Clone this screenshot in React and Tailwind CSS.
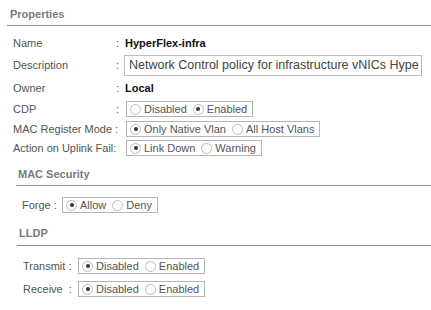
import React from "react";

function Radio({ checked }) {
  return (
    <span className="inline-flex items-center justify-center w-[11px] h-[11px] rounded-full border border-[#bcbcbc] bg-white shrink-0">
      {checked && <span className="w-[4px] h-[4px] rounded-full bg-[#333]" />}
    </span>
  );
}

function RadioGroup({ options, selected }) {
  return (
    <div className="inline-flex items-center h-[16px] border border-[#b5b5b5] pl-[3px] pr-[5px] gap-[6px]">
      {options.map((o, i) => (
        <span key={o} className="inline-flex items-center gap-[3px]">
          <Radio checked={i === selected} />
          <span className="text-[#555] leading-none">{o}</span>
        </span>
      ))}
    </div>
  );
}

export default function App() {
  return (
    <div
      className="w-[431px] h-[310px] bg-white text-[11px] text-[#555] overflow-hidden"
      style={{ fontFamily: '"Liberation Sans", Arial, sans-serif' }}
    >
      <div className="ml-[7px] h-[26px] border-b border-[#8f8f8f] pl-[3px] pt-[6px]">
        <div className="font-bold text-[#7a7a7a] leading-[16px]">Properties</div>
      </div>

      <div className="pl-[13px] pt-[9px]">
        <div className="flex items-center h-[16px]">
          <span className="w-[103px]">Name</span>
          <span className="w-[9px]">:</span>
          <span className="font-bold text-[#111]">HyperFlex-infra</span>
        </div>
        <div className="flex items-center h-[21px] mt-[4px]">
          <span className="w-[103px]">Description</span>
          <span className="w-[8px]">:</span>
          <div className="w-[298px] h-[21px] border border-[#bdbdbd] pl-[4px] flex items-center whitespace-nowrap overflow-hidden text-[12.5px] text-[#444]">
            Network Control policy for infrastructure vNICs Hype
          </div>
        </div>
        <div className="flex items-center h-[16px] mt-[4px]">
          <span className="w-[103px]">Owner</span>
          <span className="w-[9px]">:</span>
          <span className="font-bold text-[#111]">Local</span>
        </div>
        <div className="flex items-center h-[16px] mt-[5px]">
          <span className="w-[103px]">CDP</span>
          <span className="w-[10px]">:</span>
          <RadioGroup options={["Disabled", "Enabled"]} selected={1} />
        </div>
        <div className="flex items-center h-[16px] mt-[4px]">
          <span className="w-[113px]">MAC Register Mode :</span>
          <RadioGroup options={["Only Native Vlan", "All Host Vlans"]} selected={0} />
        </div>
        <div className="flex items-center h-[16px] mt-[3px]">
          <span className="w-[113px]">Action on Uplink Fail:</span>
          <RadioGroup options={["Link Down", "Warning"]} selected={0} />
        </div>
      </div>

      <div className="ml-[16px]">
        <div className="h-[30px] border-b border-[#8f8f8f] pl-[2px] pt-[10px]">
          <div className="font-bold text-[#7a7a7a] leading-[16px]">MAC Security</div>
        </div>
        <div className="flex items-center h-[16px] mt-[11px] pl-[6px]">
          <span className="w-[40px]">Forge :</span>
          <RadioGroup options={["Allow", "Deny"]} selected={0} />
        </div>
      </div>

      <div className="ml-[17px]">
        <div className="h-[33px] border-b border-[#8f8f8f] pl-[2px] pt-[12px]">
          <div className="font-bold text-[#7a7a7a] leading-[16px]">LLDP</div>
        </div>
        <div className="flex items-center h-[16px] mt-[12px] pl-[6px]">
          <span className="w-[55px]">Transmit :</span>
          <RadioGroup options={["Disabled", "Enabled"]} selected={0} />
        </div>
        <div className="flex items-center h-[16px] mt-[7px] pl-[6px]">
          <span className="w-[55px]">Receive &nbsp;:</span>
          <RadioGroup options={["Disabled", "Enabled"]} selected={0} />
        </div>
      </div>
    </div>
  );
}
